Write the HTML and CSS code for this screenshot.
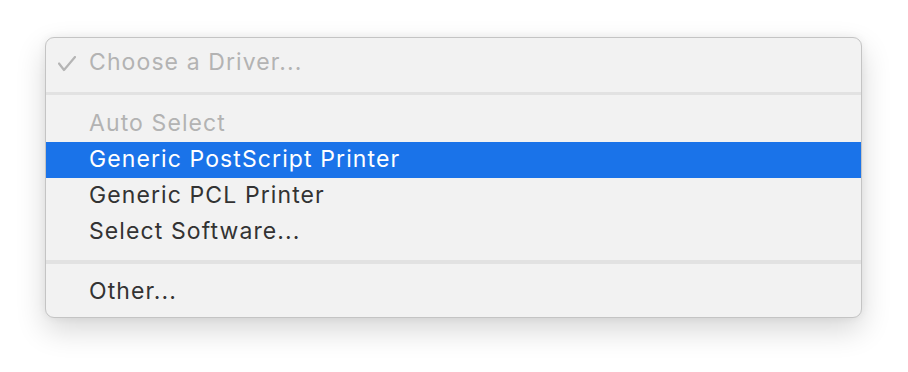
FILE: index.html
```html
<!DOCTYPE html>
<html>
<head>
<meta charset="utf-8">
<link rel="stylesheet" href="styles.css">
</head>
<body>
<div class="menu">
  <div class="item disabled">
    <span class="check"><svg width="18" height="16" viewBox="0 0 18 16"><path d="M1 7.5 L6 14 L17 1" fill="none" stroke="#b5b5b5" stroke-width="2.2" stroke-linecap="round" stroke-linejoin="round"/></svg></span>
    <span class="label">Choose a Driver...</span>
  </div>
  <div class="sep first"></div>
  <div class="item disabled"><span class="label">Auto Select</span></div>
  <div class="item selected"><span class="label">Generic PostScript Printer</span></div>
  <div class="item"><span class="label">Generic PCL Printer</span></div>
  <div class="item"><span class="label">Select Software...</span></div>
  <div class="sep second"></div>
  <div class="item"><span class="label">Other...</span></div>
</div>
</body>
</html>
```
FILE: styles.css
```css
html, body {
  margin: 0;
  padding: 0;
  background: #ffffff;
}
body {
  min-height: 100vh;
  box-sizing: border-box;
  padding: 37px 0 0 45px;
  font-family: "Inter", "Liberation Sans", Arial, sans-serif;
}
.menu {
  width: 815px;
  padding: 7px 0 7px;
  background: #f2f2f2;
  border: 1px solid #c4c4c4;
  border-radius: 9px;
  box-shadow: 0 12px 30px rgba(0, 0, 0, 0.16), 0 0 8px rgba(0, 0, 0, 0.06);
  overflow: hidden;
}
.item {
  position: relative;
  height: 36px;
  display: flex;
  align-items: center;
  padding-left: 43px;
  font-size: 23px;
  letter-spacing: 1.1px;
  color: #333333;
}
.label {
  position: relative;
  top: -1px;
}
.item.disabled {
  color: #b3b3b3;
}
.item.selected {
  background: #1a73e9;
  color: #ffffff;
}
.check {
  position: absolute;
  left: 12px;
  top: 11px;
  display: flex;
}
.sep {
  height: 3px;
  background: #e2e2e2;
}
.sep.first {
  margin: 11px 0;
}
.sep.second {
  height: 4px;
  margin: 10px 0;
}
```
